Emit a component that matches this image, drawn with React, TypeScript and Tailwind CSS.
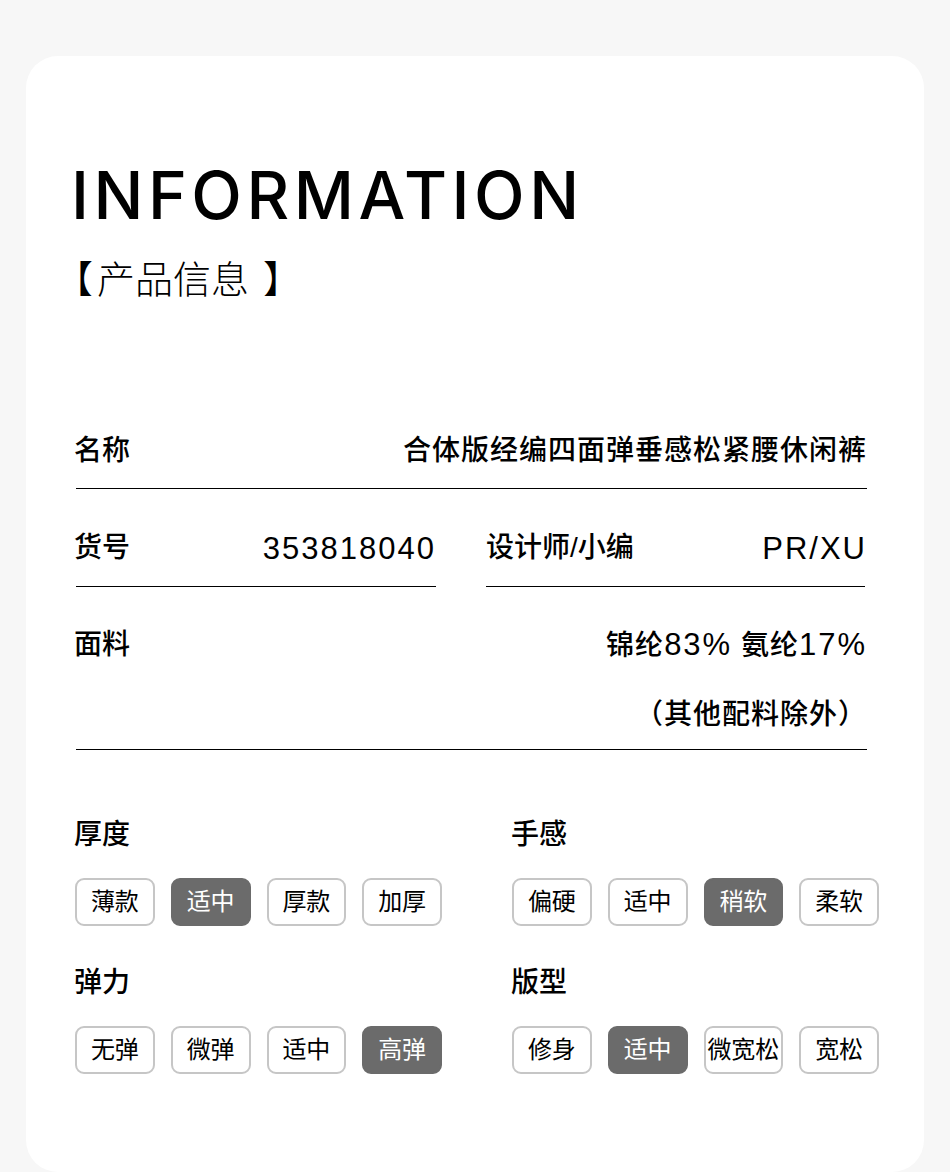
const font = "font-['Liberation_Sans','Noto_Sans_CJK_SC',sans-serif]";

type Group = { title: string; options: string[]; active: number };

const groups: Group[] = [
  { title: "厚度", options: ["薄款", "适中", "厚款", "加厚"], active: 1 },
  { title: "手感", options: ["偏硬", "适中", "稍软", "柔软"], active: 2 },
  { title: "弹力", options: ["无弹", "微弹", "适中", "高弹"], active: 3 },
  { title: "版型", options: ["修身", "适中", "微宽松", "宽松"], active: 1 },
];

const Chip = ({ label, active }: { label: string; active: boolean }) => (
  <div
    className={
      active
        ? "flex h-[48px] w-[80px] items-center justify-center rounded-[9px] border-2 border-[#6b6b6b] bg-[#6b6b6b] text-[24px] leading-none text-white"
        : "flex h-[48px] w-[80px] items-center justify-center rounded-[9px] border-2 border-[#c6c6c6] bg-white text-[24px] leading-none text-black"
    }
  >
    {label}
  </div>
);

const Line = () => <div className="ml-[2px] h-px bg-black" />;

export default function App() {
  return (
    <div className={`min-h-[1172px] bg-[#f7f7f7] px-[26px] pt-[56px] ${font}`}>
      <div className="h-[1116px] rounded-[32px] bg-white pt-[106px] pr-[57px] pl-[48px] text-black">
        <h1 className="-ml-[3px] font-['Inter',sans-serif] text-[66px] leading-none font-medium tracking-[4.5px]">
          INFORMATION
        </h1>
        <p className="mt-[33px] text-[38px] leading-none font-light [font-feature-settings:'halt']">
          【<span className="mr-[14px] ml-[4px]">产品信息</span>】
        </p>

        <div className="mt-[138px]">
          <div className="flex items-center justify-between pb-[23px] text-[28px] leading-none font-medium">
            <span>名称</span>
            <span className="tracking-[1px]">合体版经编四面弹垂感松紧腰休闲裤</span>
          </div>
          <Line />

          <div className="flex">
            <div className="w-[362px]">
              <div className="flex h-[97px] items-center justify-between pt-[45px] pb-[24px] leading-none font-medium">
                <span className="text-[28px]">货号</span>
                <span className="text-[31px] font-normal tracking-[2px]">353818040</span>
              </div>
              <Line />
            </div>
            <div className="ml-[50px] flex-1">
              <div className="flex h-[97px] items-center justify-between pt-[45px] pb-[24px] leading-none font-medium">
                <span className="text-[28px]">设计师/小编</span>
                <span className="text-[31px] font-normal tracking-[2px]">PR/XU</span>
              </div>
              <div className="mr-[2px] h-px bg-black" />
            </div>
          </div>

          <div className="pt-[42px] pb-[20px] text-[28px] leading-none font-medium">
            <div className="flex items-center justify-between">
              <span>面料</span>
              <span className="tracking-[1px]">
                锦纶<span className="text-[31px] font-normal tracking-[2px]">83%</span> 氨纶
                <span className="text-[31px] font-normal tracking-[2px]">17%</span>
              </span>
            </div>
            <div className="mt-[41px] text-right tracking-[1px]">（其他配料除外）</div>
          </div>
          <Line />
        </div>

        <div className="mt-[71px] grid grid-cols-[368px_368px] gap-x-[69px] gap-y-[43px]">
          {groups.map((g) => (
            <div key={g.title}>
              <div className="text-[28px] leading-none font-medium">{g.title}</div>
              <div className="mt-[29px] ml-px flex gap-4">
                {g.options.map((o, i) => (
                  <Chip key={o + i} label={o} active={i === g.active} />
                ))}
              </div>
            </div>
          ))}
        </div>
      </div>
    </div>
  );
}
